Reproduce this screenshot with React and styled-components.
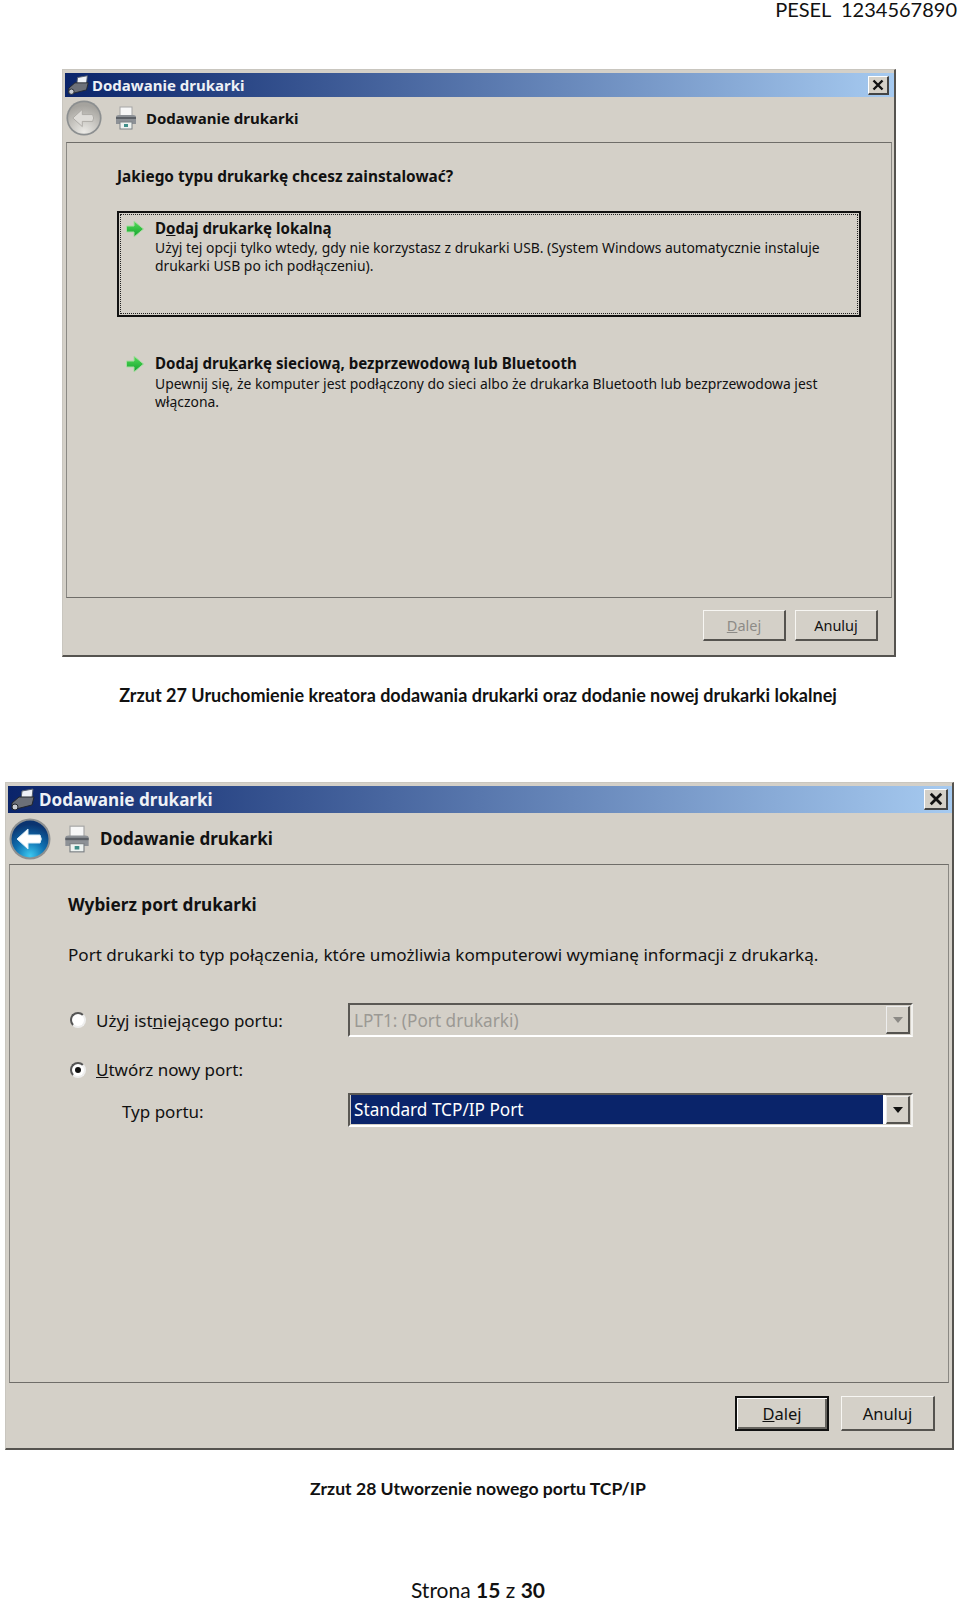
import React from "react";
import styled, { createGlobalStyle } from "styled-components";

const GlobalStyle = createGlobalStyle`
  html, body {
    margin: 0;
    padding: 0;
    background: #fff;
  }
`;

const uiFont = `"Noto Sans", Tahoma, sans-serif`;
const docFont = `Lato, Calibri, sans-serif`;

const Page = styled.div`
  width: 960px;
  height: 1601px;
  overflow: hidden;
  display: flex;
  flex-direction: column;
  font-family: ${docFont};
  color: #111;

  & > * {
    flex-shrink: 0;
  }
`;

const PageHeader = styled.div`
  height: 20px;
  line-height: 18px;
  padding-right: 3px;
  text-align: right;
  font-size: 20px;
  white-space: pre;
`;

const Caption = styled.div`
  width: 956px;
  height: 24px;
  line-height: 24px;
  margin-top: ${(p) => p.$top}px;
  text-align: center;
  font-size: ${(p) => p.$size}px;
  font-weight: 700;
`;

const PageFooter = styled.div`
  width: 956px;
  height: 23px;
  line-height: 23px;
  margin-top: 77px;
  text-align: center;
  font-size: 21px;
  b {
    font-weight: 700;
  }
`;

const Window = styled.section`
  box-sizing: border-box;
  width: ${(p) => (p.$large ? 949 : 834)}px;
  height: ${(p) => (p.$large ? 668 : 588)}px;
  margin-left: ${(p) => (p.$large ? 5 : 62)}px;
  margin-top: ${(p) => (p.$large ? 75 : 49)}px;
  padding: 3px 0 0 2px;
  display: flex;
  flex-direction: column;
  background: #d4d0c8;
  border-top: 1px solid #c9c6bf;
  border-left: 1px solid #c9c6bf;
  border-right: 2px solid #55534f;
  border-bottom: 2px solid #55534f;
  font-family: ${uiFont};
  color: #111;
`;

const TitleBar = styled.div`
  flex: none;
  height: ${(p) => (p.$large ? 27 : 24)}px;
  display: flex;
  align-items: center;
  gap: ${(p) => (p.$large ? 3 : 2)}px;
  padding: 0 ${(p) => (p.$large ? 4 : 5)}px 0 2px;
  background: linear-gradient(90deg, #0a246a 0%, #a6caf0 100%);
`;

const TitleText = styled.span`
  flex: 1;
  color: #eef1f6;
  font-weight: 700;
  font-size: ${(p) => (p.$large ? 17.1 : 15)}px;
`;

const CloseButton = styled.div`
  box-sizing: border-box;
  width: ${(p) => (p.$large ? 24 : 21)}px;
  height: ${(p) => (p.$large ? 21 : 19)}px;
  display: flex;
  align-items: center;
  justify-content: center;
  background: #d4d0c8;
  border-top: 1px solid #fff;
  border-left: 1px solid #fff;
  border-right: 2px solid #444;
  border-bottom: 2px solid #444;
`;

const HeaderBar = styled.div`
  flex: none;
  box-sizing: border-box;
  height: ${(p) => (p.$large ? 51 : 45)}px;
  display: flex;
  align-items: center;
  padding: 0 0 ${(p) => (p.$large ? 0 : 4)}px 1px;
`;

const HeaderText = styled.span`
  margin-left: ${(p) => (p.$large ? 9 : 8)}px;
  font-weight: 700;
  font-size: ${(p) => (p.$large ? 17 : 15)}px;
`;

const PrinterSlot = styled.span`
  display: flex;
  margin-left: 12px;
`;

const Panel = styled.div`
  flex: 1;
  box-sizing: border-box;
  margin: 0 ${(p) => (p.$large ? 3 : 2)}px 0 1px;
  border: 1px solid #8a8883;
  border-top-color: #6f6d69;
  border-bottom-color: #6f6d69;
  padding: ${(p) => (p.$large ? "30px 0 0 58px" : "25px 0 0 50px")};
`;

const Question = styled.h2`
  margin: 0;
  font-size: 15.4px;
  line-height: 18px;
  font-weight: 700;
`;

const Option = styled.div`
  position: relative;
  box-sizing: border-box;
  width: 744px;
  height: ${(p) => (p.$focused ? 106 : 80)}px;
  margin-top: ${(p) => (p.$focused ? 25 : 27)}px;
  padding: ${(p) => (p.$focused ? 6 : 8)}px 16px 0 6px;
  display: flex;
  gap: 10px;
  border: 2px solid ${(p) => (p.$focused ? "#111" : "transparent")};

  &::after {
    content: "";
    display: ${(p) => (p.$focused ? "block" : "none")};
    position: absolute;
    inset: 1px;
    border: 1px dotted #222;
  }
`;

const OptionBody = styled.div`
  display: flex;
  flex-direction: column;
  gap: ${(p) => p.$gap}px;
`;

const OptionTitle = styled.div`
  font-size: 15.1px;
  line-height: 18px;
  font-weight: 700;
`;

const OptionText = styled.div`
  font-size: 13.9px;
  line-height: 18px;
  white-space: pre-line;
`;

const SectionTitle = styled.h2`
  margin: 0;
  font-size: 17.2px;
  line-height: 20px;
  font-weight: 700;
`;

const Intro = styled.p`
  margin: 30px 0 0;
  font-size: 17.1px;
  line-height: 20px;
`;

const PortGrid = styled.div`
  display: grid;
  grid-template-columns: 280px 565px;
  grid-template-rows: 34px 45px 45px;
  margin-top: 38px;
`;

const FieldRow = styled.div`
  display: flex;
  align-items: ${(p) => (p.$top ? "flex-start" : "center")};
  gap: 10px;
  padding-left: 2px;
  margin-top: ${(p) => p.$top || 0}px;
  font-size: 17px;
`;

const RadioLabel = styled.span`
  line-height: 24px;
`;

const RadioSlot = styled.span`
  display: flex;
  align-items: center;
  height: 24px;
`;

const PlainLabel = styled.div`
  display: flex;
  align-items: center;
  padding: 2px 0 0 54px;
  margin-top: 11px;
  font-size: 17px;
`;

const Radio = styled.span`
  position: relative;
  box-sizing: border-box;
  flex: none;
  width: 16px;
  height: 16px;
  border-radius: 50%;
  background: #fff;
  border: 2px solid;
  border-color: #555 #eee #eee #555;

  &::after {
    content: "";
    display: ${(p) => (p.$checked ? "block" : "none")};
    position: absolute;
    left: 3px;
    top: 3px;
    width: 6px;
    height: 6px;
    border-radius: 50%;
    background: #111;
  }
`;

const Combo = styled.div`
  box-sizing: border-box;
  height: 34px;
  margin-top: ${(p) => p.$top || 0}px;
  padding: 1px;
  display: flex;
  background: #d4d0c8;
  border-style: solid;
  border-width: 2px;
  border-color: #5a5854 #f2f1ee #fff #5a5854;
`;

const ComboValue = styled.div`
  flex: 1;
  display: flex;
  align-items: center;
  padding-left: 3px;
  font-size: 17.2px;
  color: ${(p) => (p.$selected ? "#fff" : "#9b9994")};
  background: ${(p) => (p.$selected ? "#0a246a" : "transparent")};
  ${(p) => (p.$selected ? "border-right: 3px solid #fff; margin: -1px 0 0;" : "")}
`;

const ComboArrow = styled.div`
  box-sizing: border-box;
  flex: none;
  width: 24px;
  display: flex;
  align-items: center;
  justify-content: center;
  background: #d4d0c8;
  border-top: 1px solid #eee;
  border-left: 1px solid #eee;
  border-right: 2px solid #55534f;
  border-bottom: 2px solid #55534f;

  &::before {
    content: "";
    border-style: solid;
    border-width: 6px 5px 0;
    border-color: ${(p) => (p.$disabled ? "#8c8a86" : "#111")} transparent transparent;
  }
`;

const Footer = styled.div`
  flex: none;
  display: flex;
  justify-content: flex-end;
  gap: ${(p) => (p.$large ? 12 : 9)}px;
  padding: ${(p) => (p.$large ? "13px 17px 17px 0" : "12px 16px 14px 0")};
`;

const Button = styled.div`
  box-sizing: border-box;
  width: ${(p) => (p.$large ? 94 : 83)}px;
  height: ${(p) => (p.$large ? 35 : 31)}px;
  display: flex;
  align-items: center;
  justify-content: center;
  font-size: ${(p) => (p.$large ? 16.5 : 14.5)}px;
  color: ${(p) => (p.$disabled ? "#8d8b87" : "#111")};
  background: #d4d0c8;
  border-style: solid;
  border-width: ${(p) => (p.$default ? "2px" : "1px 2px 2px 1px")};
  border-color: ${(p) => (p.$default ? "#111" : "#f7f6f3 #55534f #55534f #f7f6f3")};
  box-shadow: ${(p) => (p.$default ? "inset 1px 1px 0 #fff, inset -2px -2px 0 #66645f" : "none")};
`;

const BackButton = ({ large, active }) => {
  const size = large ? 42 : 36;
  const id = active ? "backBlue" : "backGray";
  return (
    <svg width={size} height={size} viewBox="0 0 42 42">
      <defs>
        <radialGradient id={id} cx="50%" cy="95%" r="85%">
          <stop offset="0" stopColor={active ? "#3cc8f0" : "#ecebe7"} />
          <stop offset="0.5" stopColor={active ? "#0e6fb0" : "#c9c7c2"} />
          <stop offset="1" stopColor={active ? "#0b3470" : "#a5a39e"} />
        </radialGradient>
      </defs>
      <circle cx="21" cy="21" r="20.5" fill="#8c8f90" />
      <circle cx="21" cy="21" r="18.5" fill={`url(#${id})`} />
      <path
        d="M8 21 L19 11 V17 H31 Q33.5 21 31 25 H19 V31 Z"
        fill={active ? "#fff" : "#dedcd8"}
        stroke={active ? "#d8ecf6" : "#a8a6a1"}
        strokeLinejoin="round"
      />
    </svg>
  );
};

const PrinterIcon = ({ size }) => (
  <svg width={size} height={size} viewBox="0 0 24 24">
    <rect x="6" y="1" width="12" height="9" fill="#f7f7f7" stroke="#a5a5a5" />
    <path d="M2 11 Q2 9 5 9 H19 Q22 9 22 11 V18 H2 Z" fill="#8d9196" />
    <rect x="2" y="11" width="20" height="2" fill="#5c6066" />
    <rect x="6" y="16" width="12" height="7" fill="#eef3f1" stroke="#7d8286" />
    <rect x="10" y="18" width="4" height="3" fill="#3f8f8a" />
  </svg>
);

const TitleIcon = ({ size }) => (
  <svg width={size} height={size} viewBox="0 0 26 24">
    <path d="M12 3 L23 1 L22 10 L11 11 Z" fill="#eef1f6" stroke="#57606f" />
    <path d="M2 15 L9 9 H24 L22 17 L6 21 H2 Z" fill="#6c7078" stroke="#22262c" />
    <circle cx="5" cy="19" r="3" fill="#c8ccd2" stroke="#22262c" />
  </svg>
);

const CloseIcon = ({ size }) => (
  <svg width={size} height={size} viewBox="0 0 12 12">
    <path d="M1.5 1.5 L10.5 10.5 M10.5 1.5 L1.5 10.5" stroke="#111" strokeWidth="2.4" />
  </svg>
);

const GreenArrow = () => (
  <svg width="20" height="20" viewBox="0 0 20 20" style={{ flex: "none" }}>
    <defs>
      <linearGradient id="greenArrow" x1="0" y1="0" x2="0" y2="1">
        <stop offset="0" stopColor="#55dc5a" />
        <stop offset="1" stopColor="#12a22c" />
      </linearGradient>
    </defs>
    <path
      d="M1.5 7 H9 V2 L18.5 10 L9 18 V13 H1.5 Z"
      fill="url(#greenArrow)"
      stroke="#a9dba2"
      strokeWidth="1"
      strokeLinejoin="round"
    />
  </svg>
);

const WindowChrome = ({ large, backActive, children, footer }) => (
  <Window $large={large}>
    <TitleBar $large={large}>
      <TitleIcon size={large ? 26 : 23} />
      <TitleText $large={large}>Dodawanie drukarki</TitleText>
      <CloseButton $large={large}>
        <CloseIcon size={large ? 14 : 12} />
      </CloseButton>
    </TitleBar>
    <HeaderBar $large={large}>
      <BackButton large={large} active={backActive} />
      <PrinterSlot>
        <PrinterIcon size={large ? 28 : 24} />
      </PrinterSlot>
      <HeaderText $large={large}>Dodawanie drukarki</HeaderText>
    </HeaderBar>
    <Panel $large={large}>{children}</Panel>
    <Footer $large={large}>{footer}</Footer>
  </Window>
);

export default function App() {
  return (
    <Page>
      <GlobalStyle />
      <PageHeader>PESEL  1234567890</PageHeader>

      <WindowChrome
        footer={
          <>
            <Button $disabled>
              <span>
                <u>D</u>alej
              </span>
            </Button>
            <Button>Anuluj</Button>
          </>
        }
      >
        <Question>Jakiego typu drukarkę chcesz zainstalować?</Question>
        <Option $focused>
          <GreenArrow />
          <OptionBody $gap={2}>
            <OptionTitle>
              D<u>o</u>daj drukarkę lokalną
            </OptionTitle>
            <OptionText>
              {"Użyj tej opcji tylko wtedy, gdy nie korzystasz z drukarki USB. (System Windows automatycznie instaluje\ndrukarki USB po ich podłączeniu)."}
            </OptionText>
          </OptionBody>
        </Option>
        <Option>
          <GreenArrow />
          <OptionBody $gap={3}>
            <OptionTitle>
              Dodaj dru<u>k</u>arkę sieciową, bezprzewodową lub Bluetooth
            </OptionTitle>
            <OptionText>
              {"Upewnij się, że komputer jest podłączony do sieci albo że drukarka Bluetooth lub bezprzewodowa jest\nwłączona."}
            </OptionText>
          </OptionBody>
        </Option>
      </WindowChrome>

      <Caption $top={26} $size={18}>
        Zrzut 27 Uruchomienie kreatora dodawania drukarki oraz dodanie nowej drukarki lokalnej
      </Caption>

      <WindowChrome
        large
        backActive
        footer={
          <>
            <Button $large $default>
              <span>
                <u>D</u>alej
              </span>
            </Button>
            <Button $large>Anuluj</Button>
          </>
        }
      >
        <SectionTitle>Wybierz port drukarki</SectionTitle>
        <Intro>
          Port drukarki to typ połączenia, które umożliwia komputerowi wymianę informacji z drukarką.
        </Intro>
        <PortGrid>
          <FieldRow>
            <Radio />
            <span>
              Użyj ist<u>n</u>iejącego portu:
            </span>
          </FieldRow>
          <Combo>
            <ComboValue>LPT1: (Port drukarki)</ComboValue>
            <ComboArrow $disabled />
          </Combo>
          <FieldRow $top={21}>
            <RadioSlot>
              <Radio $checked />
            </RadioSlot>
            <RadioLabel>
              <u>U</u>twórz nowy port:
            </RadioLabel>
          </FieldRow>
          <span />
          <PlainLabel>Typ portu:</PlainLabel>
          <Combo $top={11}>
            <ComboValue $selected>Standard TCP/IP Port</ComboValue>
            <ComboArrow />
          </Combo>
        </PortGrid>
      </WindowChrome>

      <Caption $top={27} $size={17.6}>
        Zrzut 28 Utworzenie nowego portu TCP/IP
      </Caption>
      <PageFooter>
        Strona <b>15</b> z <b>30</b>
      </PageFooter>
    </Page>
  );
}
